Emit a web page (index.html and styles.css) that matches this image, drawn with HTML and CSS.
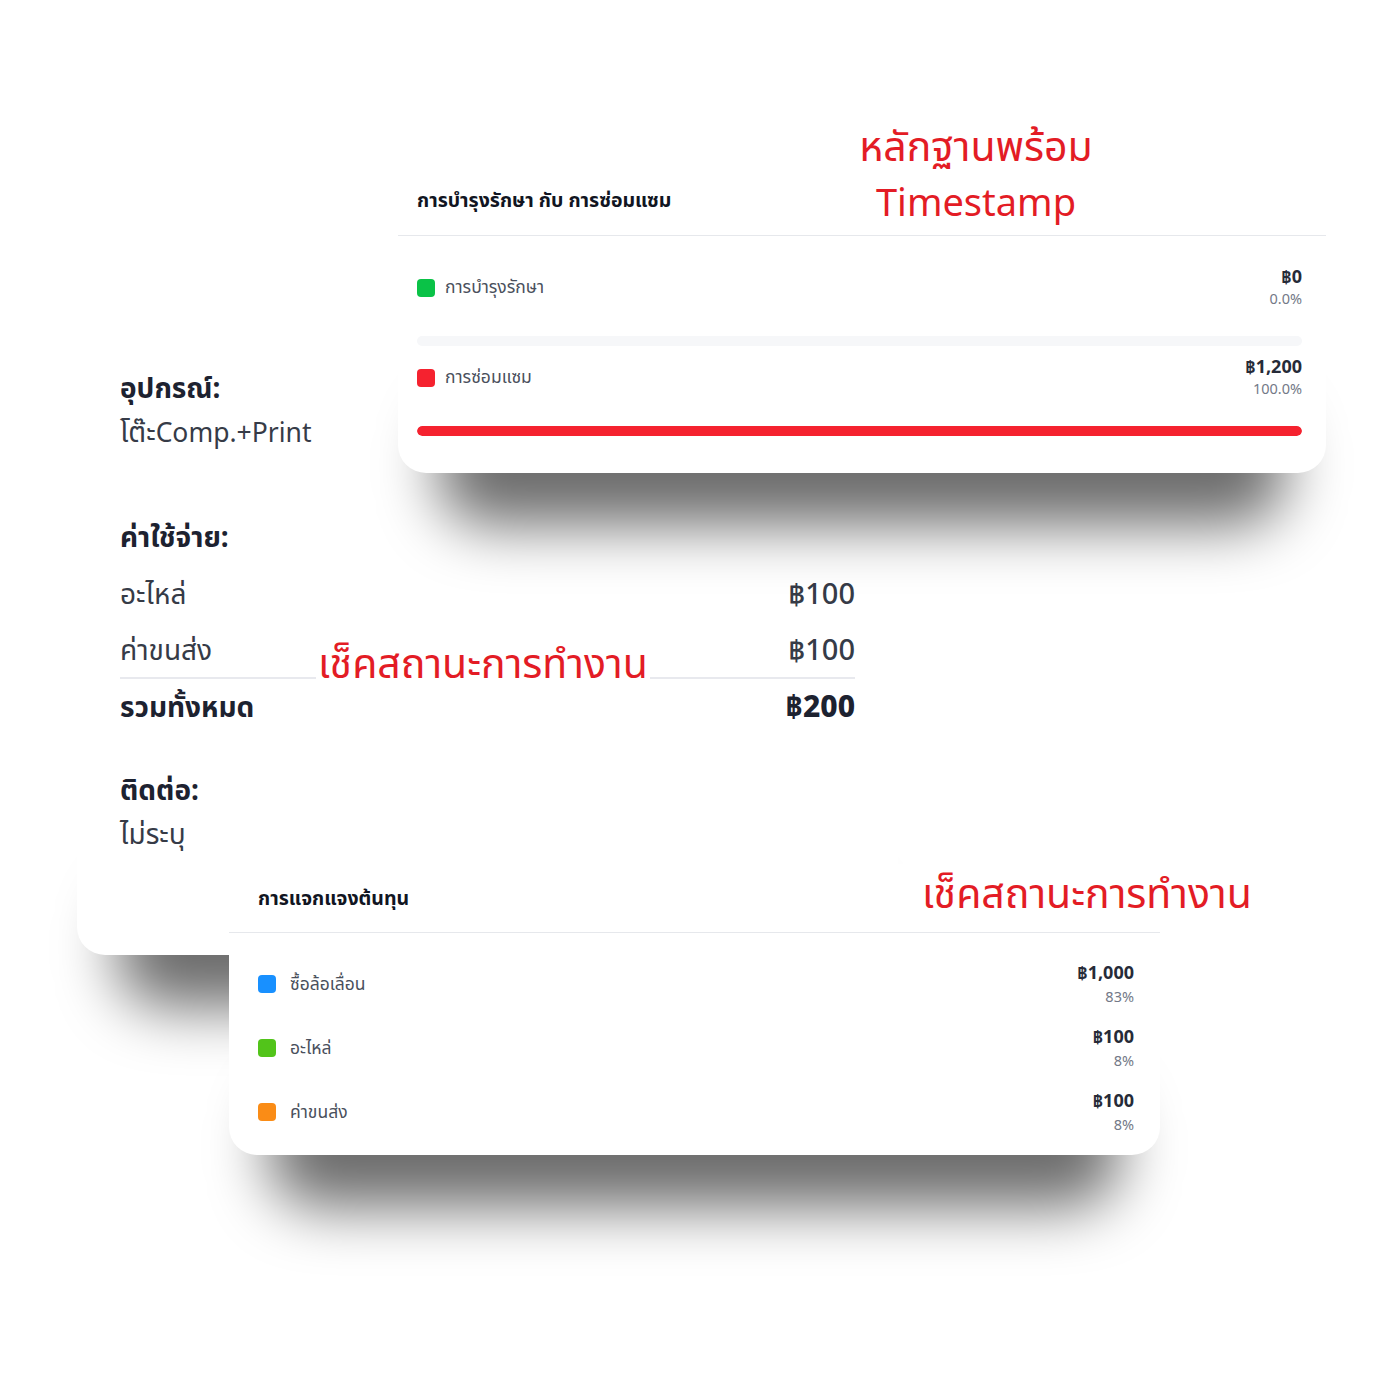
FILE: index.html
```html
<!DOCTYPE html>
<html lang="th">
<head>
<meta charset="utf-8">
<title>ค่าใช้จ่าย</title>
<link rel="stylesheet" href="styles.css">
</head>
<body>
<main class="stage">
  <div class="card-wrap wrap-info">
    <section class="card card-info">
      <div class="info-group">
        <div class="info-label">อุปกรณ์:</div>
        <div class="info-value">โต๊ะ<span class="latin">Comp.+Print</span></div>
      </div>
      <div class="info-group expenses">
        <div class="info-label">ค่าใช้จ่าย:</div>
        <div class="exp-row"><span>อะไหล่</span><span class="money">฿100</span></div>
        <div class="exp-row"><span>ค่าขนส่ง</span><span class="money">฿100</span></div>
        <div class="exp-row exp-total"><span>รวมทั้งหมด</span><span class="money">฿200</span></div>
      </div>
      <div class="info-group contact">
        <div class="info-label">ติดต่อ:</div>
        <div class="info-value">ไม่ระบุ</div>
      </div>
    </section>
  </div>

  <div class="card-wrap wrap-maint">
    <section class="card card-maint">
      <header class="card-head">การบำรุงรักษา กับ การซ่อมแซม</header>
      <div class="maint-body">
        <div class="mrow">
          <div class="mrow-head">
            <span class="legend"><i class="swatch sw-green"></i>การบำรุงรักษา</span>
            <span class="vals"><b>฿0</b><small>0.0%</small></span>
          </div>
          <div class="track"><div class="fill fill-green" style="width:0%"></div></div>
        </div>
        <div class="mrow">
          <div class="mrow-head">
            <span class="legend"><i class="swatch sw-red"></i>การซ่อมแซม</span>
            <span class="vals"><b>฿1,200</b><small>100.0%</small></span>
          </div>
          <div class="track"><div class="fill fill-red" style="width:100%"></div></div>
        </div>
      </div>
    </section>
  </div>

  <div class="card-wrap wrap-cost">
    <section class="card card-cost">
      <header class="card-head">การแจกแจงต้นทุน</header>
      <div class="cost-body">
        <div class="crow">
          <span class="legend"><i class="swatch sw-blue"></i>ซื้อล้อเลื่อน</span>
          <span class="vals"><b>฿1,000</b><small>83%</small></span>
        </div>
        <div class="crow">
          <span class="legend"><i class="swatch sw-lime"></i>อะไหล่</span>
          <span class="vals"><b>฿100</b><small>8%</small></span>
        </div>
        <div class="crow">
          <span class="legend"><i class="swatch sw-orange"></i>ค่าขนส่ง</span>
          <span class="vals"><b>฿100</b><small>8%</small></span>
        </div>
      </div>
    </section>
  </div>

  <p class="note note-evidence">หลักฐานพร้อม<br><span class="latin">Timestamp</span></p>
  <p class="note note-status-a">เช็คสถานะการทำงาน</p>
  <p class="note note-status-b">เช็คสถานะการทำงาน</p>
</main>
</body>
</html>
```
FILE: styles.css
```css
* { box-sizing: border-box; }
html, body { margin: 0; padding: 0; background: #fff; }
body {
  font-family: "Noto Sans", "Noto Sans Thai", "Liberation Sans", sans-serif;
  color: #1f2433;
}
.stage {
  position: relative;
  width: 1400px;
  height: 1400px;
  overflow: hidden;
  background: #fff;
}

/* cards placed on a free collage canvas */
.card-wrap {
  position: absolute;
}
.card-wrap::before {
  content: "";
  position: absolute;
  left: 40px;
  right: 40px;
  bottom: -52px;
  height: 120px;
  border-radius: 50px;
  background: rgba(0, 0, 0, 0.58);
  filter: blur(30px);
}
.card {
  position: relative;
  background: #fff;
  border-radius: 28px;
}
.wrap-info {
  left: 77px;
  top: 300px;
  width: 821px;
  z-index: 1;
}
.wrap-maint {
  left: 398px;
  top: 165px;
  width: 928px;
  z-index: 2;
}
.wrap-cost {
  left: 229px;
  top: 864px;
  width: 931px;
  z-index: 2;
}

/* info card */
.card-info {
  height: 655px;
  padding: 65px 43px 0 43px;
}
.info-group { display: flex; flex-direction: column; }
.info-label, .info-value {
  font-size: 28px;
  line-height: 44px;
}
.info-label { font-weight: 700; color: #1d2230; }
.info-value { color: #363b47; }
.info-value .latin { font-size: 26.5px; }
.expenses { margin-top: 60px; }
.expenses .info-label { margin-bottom: 7px; }
.exp-row {
  display: flex;
  justify-content: space-between;
  color: #363b47;
  font-size: 28px;
  height: 56px;
  line-height: 56px;
}
.exp-row .money { font-weight: 500; font-size: 29px; }
.exp-total {
  border-top: 2px solid #e8e9ee;
  height: 58px;
  line-height: 54px;
  font-weight: 700;
  color: #1d2230;
}
.exp-total .money { font-weight: 800; font-size: 30px; }
.contact { margin-top: 32px; }

/* chart cards */
.card-head {
  display: flex;
  align-items: center;
  height: 71px;
  border-bottom: 1px solid #e6e8ec;
  padding-left: 19px;
  padding-top: 2px;
  font-size: 19.5px;
  font-weight: 700;
  color: #111522;
}
.card-cost .card-head { height: 69px; padding-left: 29px; }

.maint-body { padding: 29px 24px 37px 19px; }
.mrow + .mrow { margin-top: 9px; }
.mrow-head, .crow {
  display: flex;
  justify-content: space-between;
  align-items: center;
}
.legend {
  display: flex;
  align-items: center;
  gap: 10px;
  font-size: 17.5px;
  color: #4a505c;
}
.swatch {
  display: block;
  width: 18px;
  height: 18px;
  border-radius: 4px;
}
.sw-green { background: #0ac247; }
.sw-red { background: #f5222f; }
.sw-blue { background: #1890ff; }
.sw-lime { background: #52c41a; }
.sw-orange { background: #fa8c16; }

.vals {
  display: flex;
  flex-direction: column;
  align-items: flex-end;
}
.vals b {
  font-size: 18px;
  line-height: 22px;
  font-weight: 700;
  color: #262b38;
}
.vals small {
  font-size: 14.5px;
  line-height: 23px;
  color: #737987;
}
.track {
  margin-top: 26px;
  height: 10px;
  border-radius: 5px;
  background: #f6f7f9;
  overflow: hidden;
}
.fill { height: 100%; border-radius: 5px; }
.fill-red { background: #f5222f; }
.fill-green { background: #0ac247; }

.cost-body {
  display: flex;
  flex-direction: column;
  gap: 16px;
  padding: 27px 26px 19px 29px;
}
.crow .legend { gap: 14px; }
.crow .vals b { line-height: 24px; font-size: 18px; }
.crow .vals small { line-height: 24px; }

/* red annotations */
.note {
  position: absolute;
  margin: 0;
  z-index: 5;
  color: #e31c25;
  font-size: 41px;
  line-height: 44px;
  white-space: nowrap;
}
.note .latin { font-size: 38px; }
.note-evidence {
  left: 776px;
  top: 118px;
  width: 400px;
  text-align: center;
  line-height: 55px;
}
.note-status-a {
  left: 316px;
  top: 640px;
  padding: 0 2px;
  background: #fff;
}
.note-status-b {
  left: 922px;
  top: 870px;
}
```
